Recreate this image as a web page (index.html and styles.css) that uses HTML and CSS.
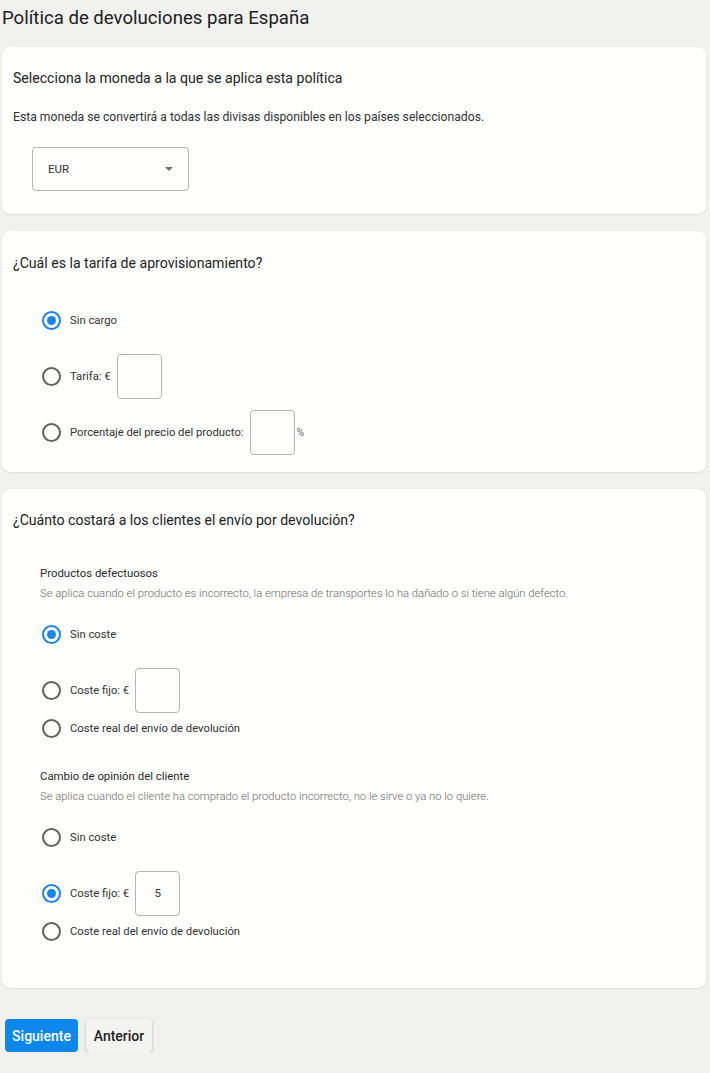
FILE: index.html
```html
<!DOCTYPE html>
<html lang="es">
<head>
<meta charset="utf-8">
<title>Política de devoluciones para España</title>
<link rel="stylesheet" href="styles.css">
</head>
<body>
<div class="page">
  <h1 class="title">Política de devoluciones para España</h1>

  <section class="card card-currency">
    <h2 class="card-heading">Selecciona la moneda a la que se aplica esta política</h2>
    <p class="card-text">Esta moneda se convertirá a todas las divisas disponibles en los países seleccionados.</p>
    <div class="select">
      <span class="select-value">EUR</span>
      <span class="select-arrow"></span>
    </div>
  </section>

  <section class="card card-fee">
    <h2 class="card-heading">¿Cuál es la tarifa de aprovisionamiento?</h2>
    <div class="options options-fee">
      <div class="option tall">
        <span class="radio checked"></span>
        <span class="label">Sin cargo</span>
      </div>
      <div class="option tall">
        <span class="radio"></span>
        <span class="label">Tarifa: €</span>
        <span class="box"></span>
      </div>
      <div class="option tall">
        <span class="radio"></span>
        <span class="label">Porcentaje del precio del producto:</span>
        <span class="box"></span>
        <span class="suffix">%</span>
      </div>
    </div>
  </section>

  <section class="card card-shipping">
    <h2 class="card-heading">¿Cuánto costará a los clientes el envío por devolución?</h2>

    <div class="sub sub-first">
      <h3 class="sub-title">Productos defectuosos</h3>
      <p class="sub-desc">Se aplica cuando el producto es incorrecto, la empresa de transportes lo ha dañado o si tiene algún defecto.</p>
      <div class="options">
        <div class="option tall">
          <span class="radio checked"></span>
          <span class="label">Sin coste</span>
        </div>
        <div class="option tall">
          <span class="radio"></span>
          <span class="label">Coste fijo: €</span>
          <span class="box"></span>
        </div>
        <div class="option short">
          <span class="radio"></span>
          <span class="label">Coste real del envío de devolución</span>
        </div>
      </div>
    </div>

    <div class="sub sub-second">
      <h3 class="sub-title">Cambio de opinión del cliente</h3>
      <p class="sub-desc">Se aplica cuando el cliente ha comprado el producto incorrecto, no le sirve o ya no lo quiere.</p>
      <div class="options">
        <div class="option tall">
          <span class="radio"></span>
          <span class="label">Sin coste</span>
        </div>
        <div class="option tall">
          <span class="radio checked"></span>
          <span class="label">Coste fijo: €</span>
          <span class="box">5</span>
        </div>
        <div class="option short">
          <span class="radio"></span>
          <span class="label">Coste real del envío de devolución</span>
        </div>
      </div>
    </div>
  </section>

  <div class="actions">
    <button class="btn btn-primary" type="button">Siguiente</button>
    <button class="btn btn-secondary" type="button">Anterior</button>
  </div>
</div>
</body>
</html>
```

FILE: styles.css
```css
* { box-sizing: border-box; }

html, body {
  margin: 0;
  padding: 0;
  background: #f1f1f0;
}

body {
  font-family: Roboto, "Liberation Sans", Arial, sans-serif;
  color: #222;
}

.page {
  width: 710px;
  padding: 6px 4px 0 2px;
}

.title {
  margin: 0;
  font-size: 18.6px;
  line-height: 24px;
  font-weight: 400;
  color: #202020;
}

.card {
  background: #fefefd;
  border-radius: 8px;
  box-shadow: 0 0 1px rgba(0, 0, 0, 0.12), 0 1px 2px rgba(0, 0, 0, 0.06);
  padding: 21px 11px 23px 11px;
}

.card-currency {
  margin-top: 17px;
  height: 167px;
}

.card-fee {
  margin-top: 17px;
  height: 241px;
  padding-top: 22px;
}

.card-shipping {
  margin-top: 17px;
  height: 499px;
}

.card-heading {
  margin: 0;
  font-size: 14.1px;
  line-height: 20px;
  font-weight: 400;
  color: #222;
}

.card-text {
  margin: 20px 0 0;
  font-size: 12.2px;
  line-height: 18px;
  color: #333;
}

.select {
  margin: 21px 0 0 19px;
  width: 157px;
  height: 44px;
  border: 1px solid #b5b5b5;
  border-radius: 4px;
  display: flex;
  align-items: center;
  justify-content: space-between;
  padding: 0 15px 0 15px;
}

.select-value {
  font-size: 11.5px;
  color: #333;
}

.select-arrow {
  width: 0;
  height: 0;
  border-left: 4.5px solid transparent;
  border-right: 4.5px solid transparent;
  border-top: 4.5px solid #707070;
}

.options {
  display: flex;
  flex-direction: column;
  gap: 12px;
}

.options-fee {
  margin-top: 25px;
  padding-left: 29px;
}

.option {
  display: flex;
  align-items: center;
}

.option.tall { height: 44px; }

.option.short {
  height: 20px;
  margin-top: -6px;
}

.radio {
  width: 19px;
  height: 19px;
  border: 2px solid #616161;
  border-radius: 50%;
  flex: none;
  display: flex;
  align-items: center;
  justify-content: center;
  margin-right: 9px;
}

.radio.checked {
  border-color: #1a84ec;
}

.radio.checked::after {
  content: "";
  width: 9px;
  height: 9px;
  border-radius: 50%;
  background: #1a84ec;
}

.label {
  font-size: 11.25px;
  color: #333;
}

.box {
  width: 45px;
  height: 45px;
  border: 1px solid #b5b5b5;
  border-radius: 4px;
  margin-left: 6px;
  display: flex;
  align-items: center;
  justify-content: center;
  font-size: 11.5px;
  color: #333;
}

.suffix {
  font-size: 10.5px;
  color: #666;
  margin-left: 2px;
}

.sub {
  padding-left: 27px;
}

.sub .options {
  padding-left: 2px;
  margin-top: 10px;
}

.sub-first { margin-top: 34px; }
.sub-second { margin-top: 29px; }

.sub-title {
  margin: 0;
  font-size: 11.4px;
  line-height: 18px;
  font-weight: 400;
  color: #2a2a2a;
}

.sub-desc {
  margin: 4px 0 0;
  font-size: 11.25px;
  line-height: 16px;
  font-weight: 300;
  color: #6b6b66;
}

.actions {
  display: flex;
  gap: 8px;
  margin-top: 31px;
  padding-left: 3px;
}

.btn {
  height: 33px;
  border: none;
  border-radius: 4px;
  font-family: Roboto, "Liberation Sans", Arial, sans-serif;
  font-size: 14px;
  font-weight: 500;
  padding: 0 6px;
  cursor: pointer;
}

.btn-primary {
  width: 73px;
  background: #0d87ec;
  color: #fff;
}

.btn-secondary {
  width: 66px;
  background: #f4f4f3;
  color: #222;
  box-shadow: 0 1px 3px rgba(0, 0, 0, 0.28);
}
```
